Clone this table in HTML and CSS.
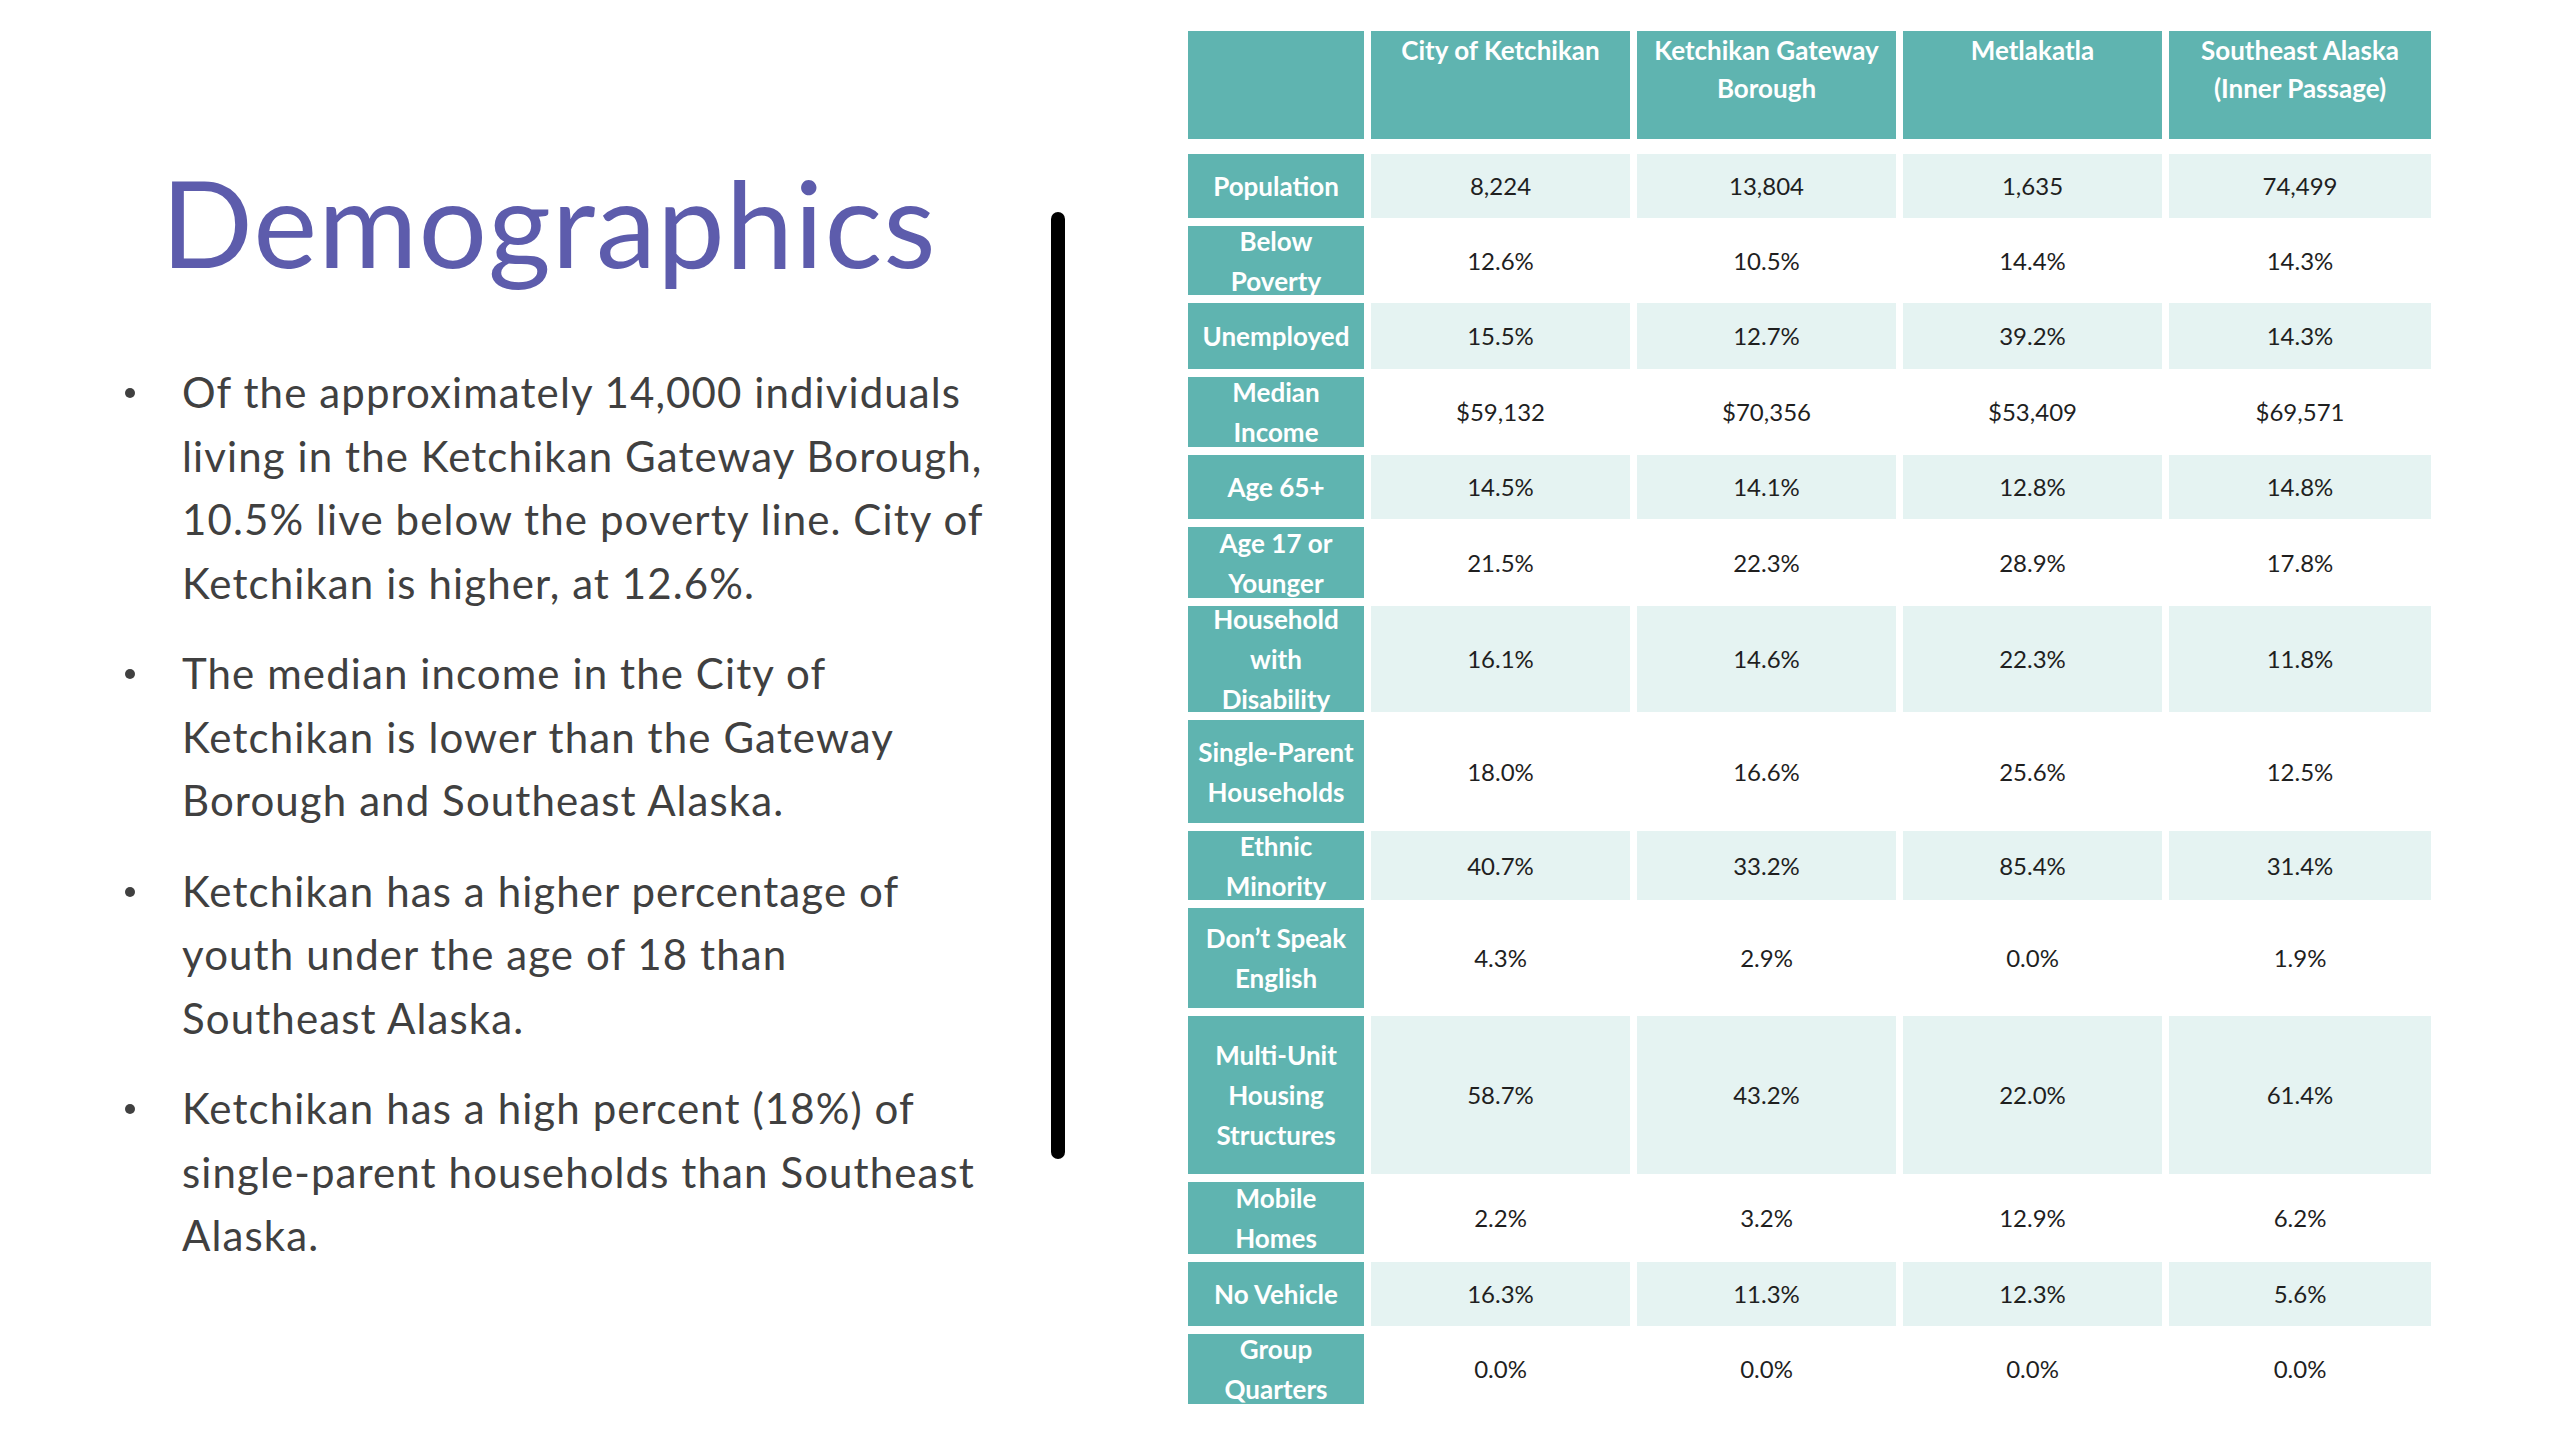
FILE: index.html
```html
<!DOCTYPE html>
<html lang="en">
<head>
<meta charset="utf-8">
<title>Demographics</title>
<link rel="stylesheet" href="styles.css">
</head>
<body>
<main class="slide">
  <section class="intro">
    <h1 class="title">Demographics</h1>
    <ul class="points">
      <li><span>Of the approximately 14,000 individuals<br>living in the Ketchikan Gateway Borough,<br>10.5% live below the poverty line. City of<br>Ketchikan is higher, at 12.6%.</span></li>
      <li><span>The median income in the City of<br>Ketchikan is lower than the Gateway<br>Borough and Southeast Alaska.</span></li>
      <li><span>Ketchikan has a higher percentage of<br>youth under the age of 18 than<br>Southeast Alaska.</span></li>
      <li><span>Ketchikan has a high percent (18%) of<br>single-parent households than Southeast<br>Alaska.</span></li>
    </ul>
  </section>
  <div class="divider"></div>
  <section class="data">
    <div class="row head">
      <div class="cell label"></div>
      <div class="cell">City of Ketchikan</div>
      <div class="cell">Ketchikan Gateway<br>Borough</div>
      <div class="cell">Metlakatla</div>
      <div class="cell">Southeast Alaska<br>(Inner Passage)</div>
    </div>
    <div class="row shade h64">
      <div class="cell label">Population</div>
      <div class="cell">8,224</div><div class="cell">13,804</div><div class="cell">1,635</div><div class="cell">74,499</div>
    </div>
    <div class="row h69">
      <div class="cell label">Below<br>Poverty</div>
      <div class="cell">12.6%</div><div class="cell">10.5%</div><div class="cell">14.4%</div><div class="cell">14.3%</div>
    </div>
    <div class="row shade h66">
      <div class="cell label">Unemployed</div>
      <div class="cell">15.5%</div><div class="cell">12.7%</div><div class="cell">39.2%</div><div class="cell">14.3%</div>
    </div>
    <div class="row h70">
      <div class="cell label">Median<br>Income</div>
      <div class="cell">$59,132</div><div class="cell">$70,356</div><div class="cell">$53,409</div><div class="cell">$69,571</div>
    </div>
    <div class="row shade h64">
      <div class="cell label">Age 65+</div>
      <div class="cell">14.5%</div><div class="cell">14.1%</div><div class="cell">12.8%</div><div class="cell">14.8%</div>
    </div>
    <div class="row h71">
      <div class="cell label">Age 17 or<br>Younger</div>
      <div class="cell">21.5%</div><div class="cell">22.3%</div><div class="cell">28.9%</div><div class="cell">17.8%</div>
    </div>
    <div class="row shade h106">
      <div class="cell label">Household<br>with<br>Disability</div>
      <div class="cell">16.1%</div><div class="cell">14.6%</div><div class="cell">22.3%</div><div class="cell">11.8%</div>
    </div>
    <div class="row h103">
      <div class="cell label">Single-Parent<br>Households</div>
      <div class="cell">18.0%</div><div class="cell">16.6%</div><div class="cell">25.6%</div><div class="cell">12.5%</div>
    </div>
    <div class="row shade h69">
      <div class="cell label">Ethnic<br>Minority</div>
      <div class="cell">40.7%</div><div class="cell">33.2%</div><div class="cell">85.4%</div><div class="cell">31.4%</div>
    </div>
    <div class="row h100">
      <div class="cell label">Don’t Speak<br>English</div>
      <div class="cell">4.3%</div><div class="cell">2.9%</div><div class="cell">0.0%</div><div class="cell">1.9%</div>
    </div>
    <div class="row shade h158">
      <div class="cell label">Multi-Unit<br>Housing<br>Structures</div>
      <div class="cell">58.7%</div><div class="cell">43.2%</div><div class="cell">22.0%</div><div class="cell">61.4%</div>
    </div>
    <div class="row h72">
      <div class="cell label">Mobile<br>Homes</div>
      <div class="cell">2.2%</div><div class="cell">3.2%</div><div class="cell">12.9%</div><div class="cell">6.2%</div>
    </div>
    <div class="row shade h64">
      <div class="cell label">No Vehicle</div>
      <div class="cell">16.3%</div><div class="cell">11.3%</div><div class="cell">12.3%</div><div class="cell">5.6%</div>
    </div>
    <div class="row h70">
      <div class="cell label">Group<br>Quarters</div>
      <div class="cell">0.0%</div><div class="cell">0.0%</div><div class="cell">0.0%</div><div class="cell">0.0%</div>
    </div>
  </section>
</main>
</body>
</html>
```

FILE: styles.css
```css
html, body {
  margin: 0;
  padding: 0;
  background: #ffffff;
}

.slide {
  display: flex;
  align-items: flex-start;
  width: 2560px;
  height: 1440px;
  overflow: hidden;
  font-family: "Lato", "Open Sans", sans-serif;
}

.intro {
  width: 1051px;
  flex: none;
  box-sizing: border-box;
  padding: 149px 0 0 125px;
}

.title {
  margin: 0 0 0 36px;
  font-size: 121px;
  font-weight: 400;
  line-height: 1.2;
  letter-spacing: 1px;
  color: #5d5cac;
}

.points {
  list-style: none;
  margin: 67px 0 0;
  padding: 0;
  font-size: 42px;
  line-height: 63.5px;
  letter-spacing: 1.1px;
  color: #404040;
}

.points li {
  display: flex;
  align-items: flex-start;
  margin-bottom: 27px;
}

.points li::before {
  content: "";
  flex: none;
  width: 10px;
  height: 10px;
  margin: 27px 47px 0 0;
  border-radius: 50%;
  background: #404040;
}

.points li span {
  white-space: nowrap;
}

.divider {
  flex: none;
  width: 14px;
  height: 947px;
  margin-top: 212px;
  border-radius: 7px;
  background: #000000;
}

.data {
  flex: none;
  margin: 31px 0 0 123px;
  display: flex;
  flex-direction: column;
  gap: 8px;
}

.row {
  display: grid;
  grid-template-columns: 176px 259px 259px 259px 262px;
  column-gap: 7px;
}

.cell {
  display: flex;
  align-items: center;
  justify-content: center;
  text-align: center;
  overflow: hidden;
  font-size: 24px;
  line-height: 40px;
  color: #1f1f1f;
}

.row.shade .cell {
  background: #e5f3f2;
}

.row .cell.label,
.row.shade .cell.label {
  background: #5fb4b0;
  color: #ffffff;
  font-size: 26px;
  font-weight: 700;
}

.row.head {
  height: 108px;
  margin-bottom: 7px;
}

.row.head .cell {
  align-items: flex-start;
  background: #5fb4b0;
  color: #ffffff;
  font-size: 26px;
  font-weight: 700;
  line-height: 38px;
}

.h64 { height: 64px; }
.h66 { height: 66px; }
.h69 { height: 69px; }
.h70 { height: 70px; }
.h71 { height: 71px; }
.h72 { height: 72px; }
.h100 { height: 100px; }
.h103 { height: 103px; }
.h106 { height: 106px; }
.h158 { height: 158px; }
```
